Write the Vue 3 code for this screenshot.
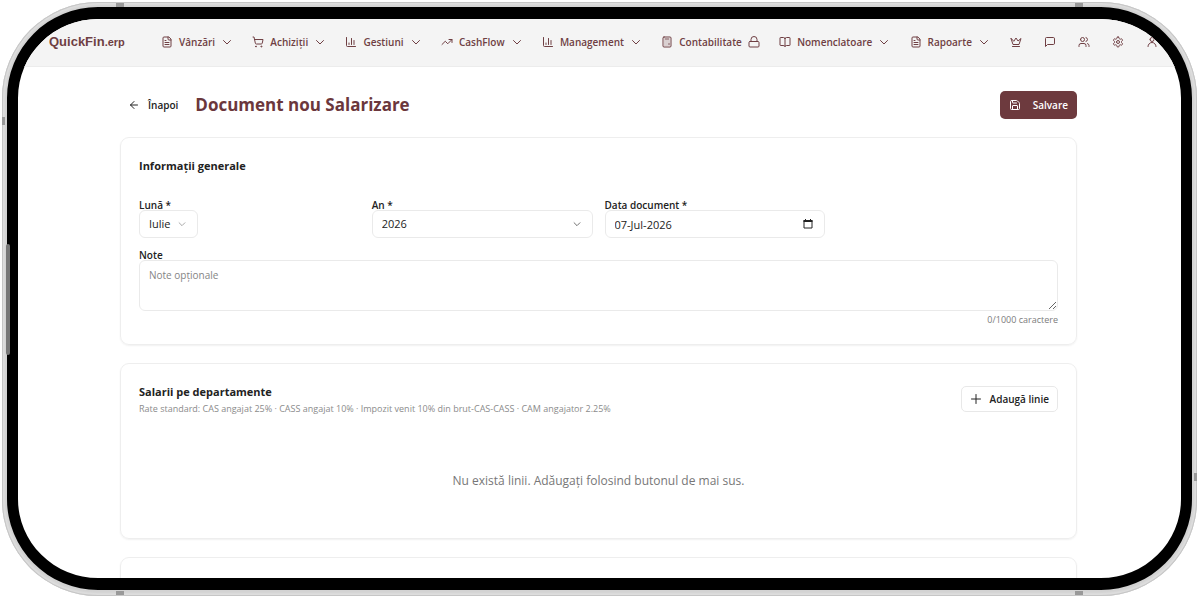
<script setup>
import { ref } from 'vue'

const icons = {
  file: ['M15 2H6a2 2 0 0 0-2 2v16a2 2 0 0 0 2 2h12a2 2 0 0 0 2-2V7Z', 'M14 2v4a2 2 0 0 0 2 2h4', 'M10 9H8', 'M16 13H8', 'M16 17H8'],
  cart: ['M7 21a1 1 0 1 0 2 0a1 1 0 1 0-2 0', 'M18 21a1 1 0 1 0 2 0a1 1 0 1 0-2 0', 'M2.05 2.05h2l2.66 12.42a2 2 0 0 0 2 1.58h9.78a2 2 0 0 0 1.95-1.57l1.65-7.43H5.12'],
  chart: ['M3 3v16a2 2 0 0 0 2 2h16', 'M18 17V9', 'M13 17V5', 'M8 17v-3'],
  trend: ['M22 7l-8.500 8.500-5-5L2 17', 'M16 7h6v6'],
  calc: ['M6 2h12a2 2 0 0 1 2 2v16a2 2 0 0 1-2 2H6a2 2 0 0 1-2-2V4a2 2 0 0 1 2-2Z', 'M8 6h8', 'M16 14v4', 'M16 10h.01', 'M12 10h.01', 'M8 10h.01', 'M12 14h.01', 'M8 14h.01', 'M12 18h.01', 'M8 18h.01'],
  book: ['M12 5v16', 'M3 19a1 1 0 0 1-1-1V4a1 1 0 0 1 1-1h6a3 3 0 0 1 3 3a3 3 0 0 1 3-3h6a1 1 0 0 1 1 1v14a1 1 0 0 1-1 1h-6a3 3 0 0 0-3 2a3 3 0 0 0-3-2Z'],
  chevron: ['M5 9l7 7l7-7'],
  lock: ['M4 11h16a2 2 0 0 1 2 2v7a2 2 0 0 1-2 2H4a2 2 0 0 1-2-2v-7a2 2 0 0 1 2-2Z', 'M6 11V7a6 6 0 0 1 12 0v4'],
  crown: ['M2 5l4 12h12l4-12l-6 5l-4-6l-4 6Z', 'M5 21h14'],
  message: ['M21 15a2 2 0 0 1-2 2H7l-4 4V5a2 2 0 0 1 2-2h14a2 2 0 0 1 2 2Z'],
  users: ['M16 21v-2a4 4 0 0 0-4-4H6a4 4 0 0 0-4 4v2', 'M5 7a4 4 0 1 0 8 0a4 4 0 1 0-8 0', 'M22 21v-2a4 4 0 0 0-3-3.870', 'M16 3.130a4 4 0 0 1 0 7.750'],
  gear: ['M12.220 2h-.44a2 2 0 0 0-2 2v.18a2 2 0 0 1-1 1.730l-.43.25a2 2 0 0 1-2 0l-.15-.08a2 2 0 0 0-2.730.73l-.22.38a2 2 0 0 0 .73 2.730l.15.1a2 2 0 0 1 1 1.720v.51a2 2 0 0 1-1 1.740l-.15.09a2 2 0 0 0-.73 2.730l.22.38a2 2 0 0 0 2.730.73l.15-.08a2 2 0 0 1 2 0l.43.25a2 2 0 0 1 1 1.730V20a2 2 0 0 0 2 2h.44a2 2 0 0 0 2-2v-.18a2 2 0 0 1 1-1.730l.43-.25a2 2 0 0 1 2 0l.15.08a2 2 0 0 0 2.730-.73l.22-.39a2 2 0 0 0-.73-2.730l-.15-.08a2 2 0 0 1-1-1.740v-.5a2 2 0 0 1 1-1.740l.15-.09a2 2 0 0 0 .73-2.730l-.22-.38a2 2 0 0 0-2.730-.73l-.15.08a2 2 0 0 1-2 0l-.43-.25a2 2 0 0 1-1-1.730V4a2 2 0 0 0-2-2Z', 'M9 12a3 3 0 1 0 6 0a3 3 0 1 0-6 0'],
  user: ['M8 7a4 4 0 1 0 8 0a4 4 0 1 0-8 0', 'M4 21a8 8 0 0 1 16 0'],
  back: ['M12 19l-7-7l7-7', 'M19 12H5'],
  plus: ['M3 12h18', 'M12 3v18'],
  save: ['M15.200 3a2 2 0 0 1 1.400.6l3.800 3.800a2 2 0 0 1 .6 1.400V19a2 2 0 0 1-2 2H5a2 2 0 0 1-2-2V5a2 2 0 0 1 2-2Z', 'M17 21v-7a1 1 0 0 0-1-1H8a1 1 0 0 0-1 1v7', 'M7 3v4a1 1 0 0 0 1 1h7']
}

const menu = [
  { label: 'Vânzări', icon: 'file', end: 'chevron' },
  { label: 'Achiziții', icon: 'cart', end: 'chevron' },
  { label: 'Gestiuni', icon: 'chart', end: 'chevron' },
  { label: 'CashFlow', icon: 'trend', end: 'chevron' },
  { label: 'Management', icon: 'chart', end: 'chevron' },
  { label: 'Contabilitate', icon: 'calc', end: 'lock' },
  { label: 'Nomenclatoare', icon: 'book', end: 'chevron' },
  { label: 'Rapoarte', icon: 'file', end: 'chevron' }
]

const tools = [
  { label: 'Abonament', icon: 'crown' },
  { label: 'Mesaje', icon: 'message' },
  { label: 'Utilizatori', icon: 'users' },
  { label: 'Setări', icon: 'gear' },
  { label: 'Cont', icon: 'user' }
]

const month = ref('Iulie')
const year = ref('2026')
const date = ref('07-Jul-2026')
const note = ref('')
</script>

<template>
  <div class="stage">
    <div class="device">
      <i class="seam top-left"></i><i class="seam top-right"></i>
      <i class="seam bottom-left"></i><i class="seam bottom-right"></i>
      <i class="seam side-left"></i><i class="seam side-right"></i>
      <i class="side-button"></i>
      <div class="screen">
        <header class="topbar">
          <a class="logo" href="#">QuickFin<span>.erp</span></a>
          <nav class="menu">
            <button v-for="m in menu" :key="m.label" type="button" class="menu-item">
              <svg class="icon" viewBox="0 0 24 24"><path v-for="d in icons[m.icon]" :key="d" :d="d" /></svg>
              <span>{{ m.label }}</span>
              <svg class="icon" viewBox="0 0 24 24"><path v-for="d in icons[m.end]" :key="d" :d="d" /></svg>
            </button>
          </nav>
          <div class="tools">
            <button v-for="t in tools" :key="t.label" type="button" class="tool" :aria-label="t.label">
              <svg class="icon" viewBox="0 0 24 24"><path v-for="d in icons[t.icon]" :key="d" :d="d" /></svg>
            </button>
          </div>
        </header>

        <main class="content">
          <div class="page-head">
            <a class="back" href="#">
              <svg class="icon" viewBox="0 0 24 24"><path v-for="d in icons.back" :key="d" :d="d" /></svg>Înapoi
            </a>
            <h1>Document nou Salarizare</h1>
            <button type="button" class="save">
              <svg class="icon" viewBox="0 0 24 24"><path v-for="d in icons.save" :key="d" :d="d" /></svg>Salvare
            </button>
          </div>

          <section class="card">
            <h2>Informații generale</h2>
            <div class="fields">
              <div class="field">
                <label for="month">Lună *</label>
                <div class="control compact">
                  <select id="month" v-model="month"><option>Iulie</option></select>
                  <svg class="icon small caret" viewBox="0 0 24 24"><path :d="icons.chevron[0]" /></svg>
                </div>
              </div>
              <div class="field">
                <label for="year">An *</label>
                <div class="control">
                  <select id="year" v-model="year"><option>2026</option></select>
                  <svg class="icon small caret dark" viewBox="0 0 24 24"><path :d="icons.chevron[0]" /></svg>
                </div>
              </div>
              <div class="field">
                <label for="date">Data document *</label>
                <div class="control">
                  <input id="date" v-model="date" type="text" />
                  <svg class="calendar" viewBox="0 0 10 10"><path d="M1 1.500h8v7.500H1Z" /><path class="solid" d="M.5 1h9v2h-9ZM2 0h1v1H2ZM7 0h1v1H7Z" /></svg>
                </div>
              </div>
            </div>
            <div class="field note">
              <label for="note">Note</label>
              <textarea id="note" v-model="note" placeholder="Note opționale" maxlength="1000"></textarea>
            </div>
            <p class="counter">{{ note.length }}/1000 caractere</p>
          </section>

          <section class="card lines">
            <div class="lines-head">
              <div>
                <h2>Salarii pe departamente</h2>
                <p class="rates">Rate standard: CAS angajat 25% · CASS angajat 10% · Impozit venit 10% din brut-CAS-CASS · CAM angajator 2.25%</p>
              </div>
              <button type="button" class="add">
                <svg class="icon" viewBox="0 0 24 24"><path v-for="d in icons.plus" :key="d" :d="d" /></svg>Adaugă linie
              </button>
            </div>
            <p class="empty">Nu există linii. Adăugați folosind butonul de mai sus.</p>
          </section>

          <section class="card"></section>
        </main>
      </div>
    </div>
  </div>
</template>

<style>
body { background: #fff; }
</style>

<style scoped>
* { box-sizing: border-box; }
h1, h2, p { margin: 0; }
button, select, input, textarea { font: inherit; color: inherit; margin: 0; }
button { border: 0; background: none; padding: 0; cursor: pointer; }
a { color: inherit; text-decoration: none; }

.stage {
  height: 100vh;
  padding: 2px 3px 4px 2px;
  font-family: "Open Sans", "Noto Sans", sans-serif;
  font-size: 11px;
  line-height: 16px;
  color: #222;
}
.device {
  position: relative;
  height: 100%;
  padding: 5px 5px 6px;
  border-radius: 96px;
  background: #d2d2d2;
  box-shadow: inset 0 0 0 1px #c6c6c6, inset 0 0 2px 3px #dedede;
}
.seam { position: absolute; width: 8px; height: 4px; background: #999; }
.top-left { top: 1px; left: 114px; }
.top-right { top: 1px; right: 114px; }
.bottom-left { bottom: 1px; left: 114px; }
.bottom-right { bottom: 1px; right: 114px; }
.side-left, .side-right { width: 3px; height: 8px; }
.side-left { left: 0; top: 115px; }
.side-right { right: 0; bottom: 115px; }
.side-button {
  position: absolute;
  left: 4px;
  top: 242px;
  width: 4px;
  height: 111px;
  border-radius: 2px;
  background: #777;
}
.screen {
  height: 100%;
  overflow: hidden;
  border: 12px solid #000;
  border-left-width: 11px;
  border-right-width: 11px;
  border-radius: 91px;
  background: #fff;
}

.icon {
  flex: none;
  width: 12px;
  height: 12px;
  fill: none;
  stroke: currentColor;
  stroke-width: 2;
  stroke-linecap: round;
  stroke-linejoin: round;
}
.icon.small { width: 10px; height: 10px; }

.topbar {
  display: flex;
  align-items: center;
  height: 48px;
  padding: 0 23px 2px 31px;
  border-bottom: 1px solid #ececec;
  background: #f4f4f4;
  color: #6f3f43;
}
.logo {
  width: 112px;
  flex: none;
  font-family: "Liberation Sans", Arial, sans-serif;
  font-size: 13px;
  font-weight: 700;
}
.logo span { font-size: 11px; }
.menu { display: flex; flex: 1; justify-content: space-between; font-size: 10px; font-weight: 600; }
.menu-item { display: flex; align-items: center; gap: 6px; }
.tools { display: flex; gap: 22px; margin-left: 20px; }
.tool { display: flex; }

.content {
  display: flex;
  flex-direction: column;
  gap: 18px;
  padding: 24px 104px 0 102px;
}
.page-head { display: flex; align-items: center; height: 28px; }
.back { display: flex; align-items: center; gap: 8px; padding-left: 8px; font-size: 10px; font-weight: 600; }
.page-head h1 { margin-left: 17px; font-size: 17px; line-height: 24px; font-weight: 700; color: #6b373c; }
.save {
  display: flex;
  align-items: center;
  gap: 12px;
  height: 28px;
  margin-left: auto;
  padding: 0 9px;
  border-radius: 5px;
  background: #6d3a3e;
  color: #fff;
  font-size: 10px;
  font-weight: 600;
}

.card {
  padding: 18px;
  border: 1px solid #eee;
  border-radius: 9px;
  box-shadow: 0 1px 2px #0000000f;
  min-height: 60px;
}
.card h2 { font-size: 11px; line-height: 20px; font-weight: 700; }
.fields { display: grid; grid-template-columns: repeat(4, 1fr); gap: 12px; margin-top: 21px; }
.field { display: flex; flex-direction: column; align-items: stretch; }
.field label { height: 13px; font-size: 10px; font-weight: 600; }
.note { margin-top: 9px; }
.control {
  position: relative;
  height: 28px;
  border: 1px solid #eaeaea;
  border-radius: 6px;
  background: #fff;
}
.compact { width: 59px; }
.control select, .control input {
  appearance: none;
  display: block;
  width: 100%;
  height: 100%;
  padding: 0 9px;
  border: 0;
  border-radius: 6px;
  background: transparent;
  outline: 0;
}
.caret { position: absolute; right: 10px; top: 8px; color: #999; pointer-events: none; }
.dark { color: #555; }
.calendar { position: absolute; right: 11px; top: 8px; width: 10px; height: 10px; fill: none; stroke: #222; }
.calendar .solid { fill: #222; stroke: none; }
textarea {
  display: block;
  width: 100%;
  height: 51px;
  padding: 6px 9px;
  border: 1px solid #eaeaea;
  border-radius: 6px;
  outline: 0;
  resize: vertical;
}
textarea::placeholder { color: #858585; font-size: 10px; }
.counter { margin-top: 2px; font-size: 9px; line-height: 13px; text-align: right; color: #7c7c7c; }

.lines { padding-bottom: 48px; }
.lines-head { display: flex; justify-content: space-between; align-items: center; }
.rates { font-size: 9px; line-height: 14px; color: #8b8b8b; }
.add {
  display: flex;
  align-items: center;
  gap: 8px;
  height: 26px;
  padding: 0 8px;
  border: 1px solid #e8e8e8;
  border-radius: 5px;
  font-size: 10px;
  font-weight: 600;
}
.empty { margin-top: 56px; font-size: 12px; line-height: 18px; text-align: center; color: #777; }
</style>
